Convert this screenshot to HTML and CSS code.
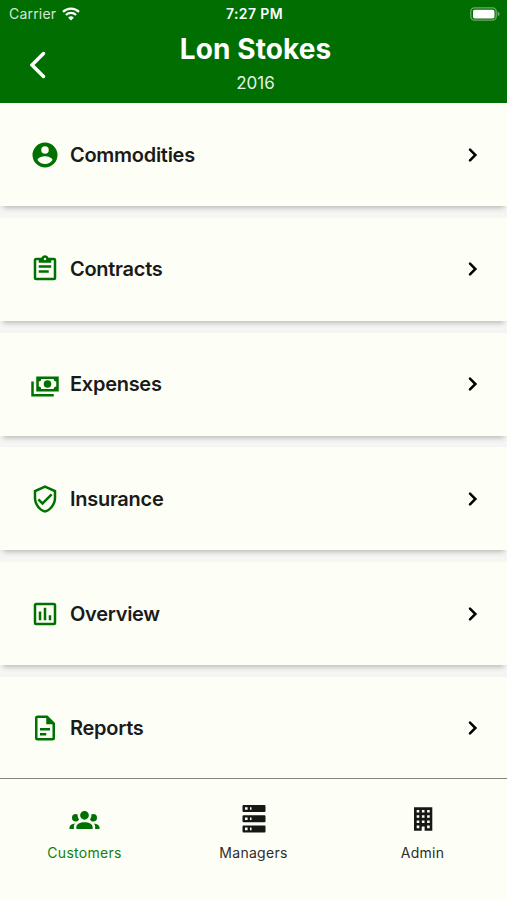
FILE: index.html
```html
<!DOCTYPE html>
<html lang="en">
<head>
    <meta charset="UTF-8">
    <meta name="viewport" content="width=device-width, initial-scale=1.0">
    <title>Lon Stokes</title>
    <link rel="stylesheet" href="styles.css">
</head>
<body>
    <div class="app">
        <header class="header">
            <div class="status-bar">
                <div class="carrier">
                    <span>Carrier</span>
                    <svg class="wifi" viewBox="0 0 18 14">
                        <path d="M1 4.9a11.6 11.6 0 0 1 16 0" />
                        <path d="M3.9 8a7.4 7.4 0 0 1 10.2 0" />
                        <path class="dot" d="M6.2 10.7a4 4 0 0 1 5.6 0L9 13.6z" />
                    </svg>
                </div>
                <div class="time">7:27 PM</div>
                <svg class="battery" viewBox="0 0 30 14">
                    <rect class="case" x="0.8" y="0.8" width="25.4" height="12.4" rx="3.6" />
                    <rect class="level" x="3" y="2.8" width="21.5" height="8.6" rx="1.6" />
                    <path class="tip" d="M27.6 4.6c2.6 1 2.6 3.6 0 4.6z" />
                </svg>
            </div>
            <div class="title-bar">
                <a class="back" href="#">
                    <svg viewBox="0 0 16 28"><path d="M13.5 2.5L2 14l11.5 11.5" /></svg>
                </a>
                <div class="title">
                    <h1>Lon Stokes</h1>
                    <p>2016</p>
                </div>
            </div>
        </header>

        <main class="menu">
            <a class="card" href="#">
                <svg class="icon" viewBox="0 0 24 24"><path fill-rule="evenodd" d="M12 2a10 10 0 1 0 0 20 10 10 0 0 0 0-20zM12 5a3 3 0 1 1 0 6 3 3 0 0 1 0-6zM12 19.2a7.2 7.2 0 0 1-6-3.22c.03-1.99 4-3.08 6-3.08s5.97 1.09 6 3.08a7.2 7.2 0 0 1-6 3.22z" /></svg>
                <span class="label">Commodities</span>
                <svg class="chevron" viewBox="0 0 10 16"><path d="M2 2.6L7.4 8 2 13.4" /></svg>
            </a>
            <a class="card" href="#">
                <svg class="icon" viewBox="0 0 24 24"><path fill-rule="evenodd" d="M19 3h-4.180C14.400 1.840 13.300 1 12 1s-2.400.84-2.820 2H5a2 2 0 0 0-2 2v14a2 2 0 0 0 2 2h14a2 2 0 0 0 2-2V5a2 2 0 0 0-2-2zM12 3a1 1 0 1 1 0 2 1 1 0 0 1 0-2zM5 5h2v2h10V5h2v14H5zM7 9h10v2H7zM7 13h8v2H7z" /></svg>
                <span class="label">Contracts</span>
                <svg class="chevron" viewBox="0 0 10 16"><path d="M2 2.6L7.4 8 2 13.4" /></svg>
            </a>
            <a class="card" href="#">
                <svg class="icon" viewBox="0 0 24 24"><path fill-rule="evenodd" d="M5 6h18v12H5zM9 8a2 2 0 0 1-2 2v4a2 2 0 0 1 2 2h10a2 2 0 0 1 2-2v-4a2 2 0 0 1-2-2zM1 10h2v10h16v2H1z" /><circle cx="14" cy="12" r="3" /></svg>
                <span class="label">Expenses</span>
                <svg class="chevron" viewBox="0 0 10 16"><path d="M2 2.6L7.4 8 2 13.4" /></svg>
            </a>
            <a class="card" href="#">
                <svg class="icon" viewBox="0 0 24 24"><path fill-rule="evenodd" d="M21 11c0 5.550-3.840 10.740-9 12-5.160-1.260-9-6.450-9-12V5l9-4 9 4zM12 21c3.750-1 7-5.460 7-9.780V6.300l-7-3.120L5 6.300v4.920C5 15.540 8.250 20 12 21zM10 17l-4-4 1.410-1.410L10 14.170l6.590-6.590L18 9z" /></svg>
                <span class="label">Insurance</span>
                <svg class="chevron" viewBox="0 0 10 16"><path d="M2 2.6L7.4 8 2 13.4" /></svg>
            </a>
            <a class="card" href="#">
                <svg class="icon" viewBox="0 0 24 24"><path fill-rule="evenodd" d="M5 3h14a2 2 0 0 1 2 2v14a2 2 0 0 1-2 2H5a2 2 0 0 1-2-2V5a2 2 0 0 1 2-2zM5 5v14h14V5zM7 10h2v7H7zM11 7h2v10h-2zM15 13h2v4h-2z" /></svg>
                <span class="label">Overview</span>
                <svg class="chevron" viewBox="0 0 10 16"><path d="M2 2.6L7.4 8 2 13.4" /></svg>
            </a>
            <a class="card" href="#">
                <svg class="icon" viewBox="0 0 24 24"><path fill-rule="evenodd" d="M6 2a2 2 0 0 0-2 2v16a2 2 0 0 0 2 2h12a2 2 0 0 0 2-2V8l-6-6zM6 4h7v5h5v11H6zM8 12v2h8v-2zM8 16v2h5v-2z" /></svg>
                <span class="label">Reports</span>
                <svg class="chevron" viewBox="0 0 10 16"><path d="M2 2.6L7.4 8 2 13.4" /></svg>
            </a>
        </main>

        <nav class="tabs">
            <a class="tab active" href="#">
                <svg viewBox="0 0 24 24"><path d="M12 5.500A3.500 3.500 0 0 1 15.500 9 3.500 3.500 0 0 1 12 12.500 3.500 3.500 0 0 1 8.500 9 3.500 3.500 0 0 1 12 5.500M5 8c.56 0 1.080.15 1.530.42-.15 1.430.27 2.850 1.130 3.960C7.160 13.340 6.160 14 5 14a3 3 0 0 1-3-3 3 3 0 0 1 3-3m14 0a3 3 0 0 1 3 3 3 3 0 0 1-3 3c-1.160 0-2.160-.66-2.660-1.620.86-1.110 1.280-2.530 1.130-3.960.45-.27.97-.42 1.530-.42M5.500 18.250c0-2.070 2.910-3.750 6.500-3.750s6.500 1.680 6.500 3.750V20h-13zM0 20v-1.500c0-1.390 1.890-2.560 4.450-2.900-.59.68-.95 1.620-.95 2.650V20zm24 0h-3.500v-1.750c0-1.030-.36-1.970-.95-2.650 2.560.34 4.450 1.510 4.450 2.900z" /></svg>
                <span>Customers</span>
            </a>
            <a class="tab" href="#">
                <svg viewBox="0 0 30 30"><path fill-rule="evenodd" d="M4.500 1h21a1 1 0 0 1 1 1v5a1 1 0 0 1-1 1h-21a1 1 0 0 1-1-1V2a1 1 0 0 1 1-1zM4.500 11.200h21a1 1 0 0 1 1 1v5a1 1 0 0 1-1 1h-21a1 1 0 0 1-1-1v-5a1 1 0 0 1 1-1zM4.500 21.400h21a1 1 0 0 1 1 1v5a1 1 0 0 1-1 1h-21a1 1 0 0 1-1-1v-5a1 1 0 0 1 1-1zM6 3.200v2.600h2.600V3.200zM11 3.200v2.600h1.500V3.200zM6 13.400V16h2.600v-2.600zM11 13.400V16h1.500v-2.600zM6 23.600v2.600h2.600v-2.600zM11 23.600v2.600h1.500v-2.600z" /></svg>
                <span>Managers</span>
            </a>
            <a class="tab" href="#">
                <svg viewBox="0 0 30 30"><path fill-rule="evenodd" d="M6 3.300h18.300v23.400h-7.700v-4.200h-2.900v4.200H6zM8.700 6v2.600h2.600V6zM13.900 6v2.600h2.600V6zM19.100 6v2.600h2.600V6zM8.700 11.200v2.600h2.600v-2.600zM13.900 11.200v2.600h2.600v-2.600zM19.100 11.200v2.600h2.600v-2.600zM8.700 16.400V19h2.600v-2.600zM13.900 16.400V19h2.600v-2.600zM19.100 16.400V19h2.600v-2.600zM8.700 21.600v2.600h2.600v-2.600zM19.100 21.600v2.600h2.600v-2.600z" /></svg>
                <span>Admin</span>
            </a>
        </nav>
    </div>
</body>
</html>
```
FILE: styles.css
```css
* {
    box-sizing: border-box;
}

body {
    font-family: 'Inter', 'Liberation Sans', sans-serif;
    background-color: #f5f5f4;
    margin: 0;
    color: #1a1a1a;
}

a {
    color: inherit;
    text-decoration: none;
}

svg {
    display: block;
    flex-shrink: 0;
}

.app {
    display: flex;
    flex-direction: column;
    height: 900px;
    overflow: hidden;
}

/* header */
.header {
    flex-shrink: 0;
    height: 103px;
    background-color: #006e00;
    color: #fff;
}

.status-bar {
    display: grid;
    grid-template-columns: 1fr auto 1fr;
    align-items: center;
    height: 27px;
    padding: 0 7px 0 9px;
    font-size: 14px;
}

.carrier {
    display: flex;
    align-items: center;
    gap: 6px;
    color: #d5e8d5;
    letter-spacing: 0.2px;
}

.wifi {
    width: 18px;
    height: 14px;
    fill: none;
    stroke: #fff;
    stroke-width: 2.2;
}

.wifi .dot {
    fill: #fff;
    stroke: none;
}

.time {
    font-size: 14px;
    font-weight: 600;
    letter-spacing: 0.4px;
}

.battery {
    width: 30px;
    height: 14px;
    justify-self: end;
    fill: #fff;
}

.battery .case {
    fill: none;
    stroke: #6cab6c;
    stroke-width: 1.3;
}

.battery .tip {
    fill: #6cab6c;
}

.title-bar {
    display: grid;
    grid-template-columns: 60px 1fr 60px;
    align-items: center;
    height: 76px;
}

.back svg {
    width: 16px;
    height: 28px;
    margin-left: 30px;
    fill: none;
    stroke: #fff;
    stroke-width: 3.4;
    stroke-linecap: round;
}

.title {
    text-align: center;
    padding: 0 0 5px 4px;
}

.title h1 {
    margin: 0;
    font-size: 28px;
    line-height: 34px;
    font-weight: 700;
    letter-spacing: 0.1px;
}

.title p {
    margin: 6px 0 0;
    font-size: 17px;
    line-height: 22px;
    color: #e6f1e6;
}

/* menu list */
.menu {
    display: flex;
    flex-direction: column;
    gap: 11.8px;
    flex: 1;
    min-height: 0;
    overflow: hidden;
}

.card {
    display: flex;
    align-items: center;
    flex-shrink: 0;
    height: 103px;
    padding: 0 29px 0 30px;
    background-color: #fdfff6;
    box-shadow: 0 5px 5px -3px rgba(0, 0, 0, 0.24);
}

.icon {
    width: 30px;
    height: 30px;
    margin-right: 10px;
    fill: #007000;
}

.label {
    flex: 1;
    font-size: 20px;
    font-weight: 600;
    letter-spacing: -0.28px;
}

.chevron {
    width: 10px;
    height: 16px;
    fill: none;
    stroke: #000;
    stroke-width: 2.5;
    stroke-linecap: round;
}

/* bottom tabs */
.tabs {
    display: grid;
    grid-template-columns: repeat(3, 1fr);
    flex-shrink: 0;
    height: 122px;
    padding-top: 25px;
    border-top: 1px solid #858585;
    background-color: #fdfff6;
    z-index: 1;
}

.tab {
    display: flex;
    flex-direction: column;
    align-items: center;
    gap: 10px;
    font-size: 14px;
    line-height: 18px;
    letter-spacing: 0.28px;
    color: #2c2c2c;
}

.tab svg {
    width: 30px;
    height: 30px;
    fill: #161816;
}

.tab.active {
    color: #118011;
}

.tab.active svg {
    width: 31px;
    fill: #007000;
}
```
